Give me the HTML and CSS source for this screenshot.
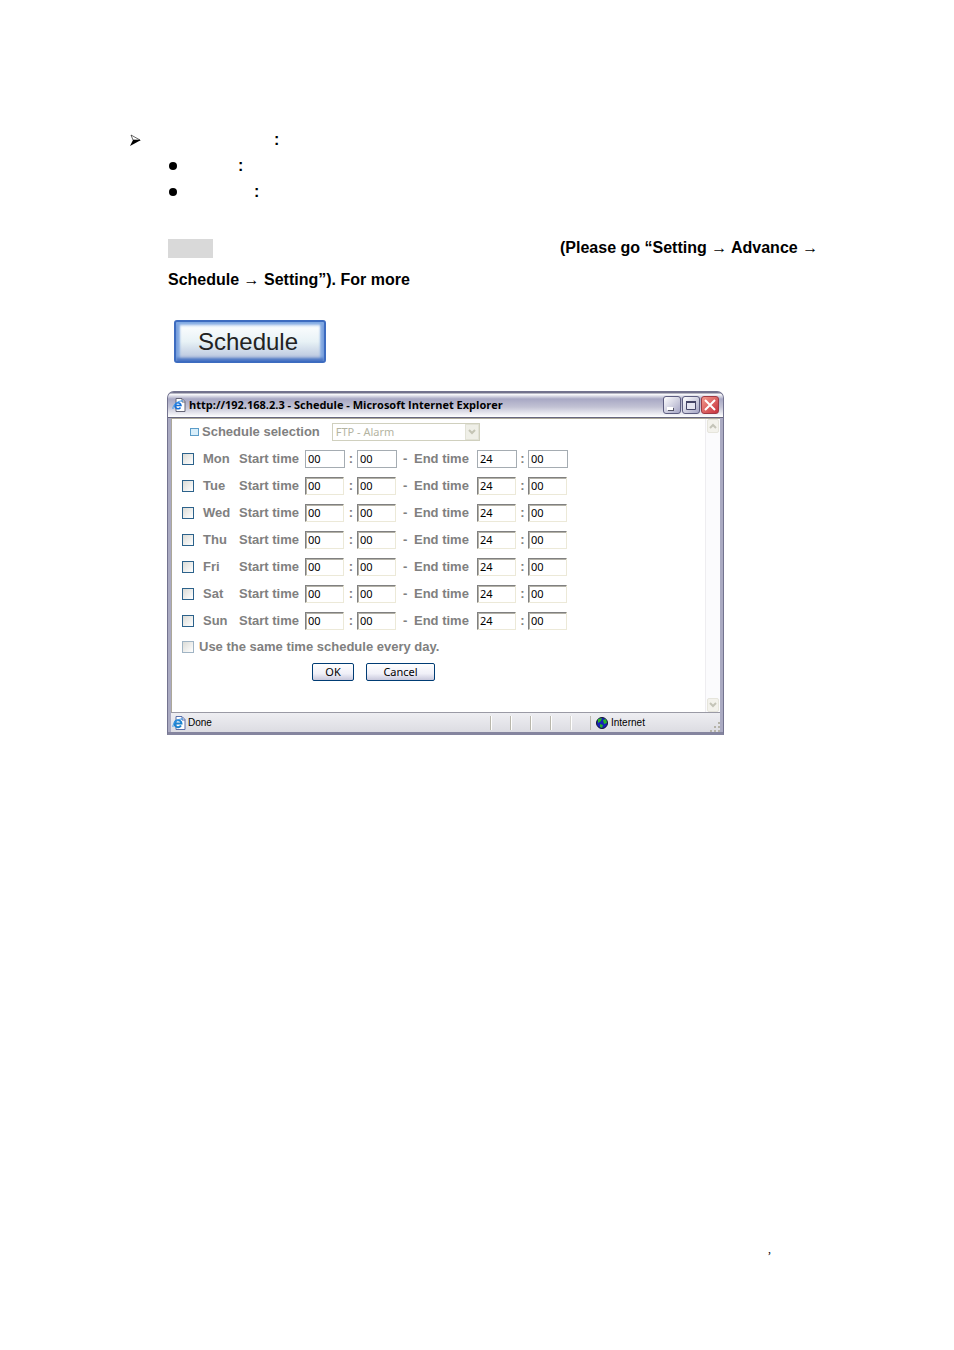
FILE: index.html
```
<!DOCTYPE html>
<html lang="en">
<head>
  <meta charset="UTF-8">
  <meta name="viewport" content="width=device-width, initial-scale=1.0">
  <title>Schedule</title>
  <link rel="stylesheet" href="styles.css">
</head>
<body>
  <main class="page">
    <div class="item item-top">
      <svg class="arrow" viewBox="0 0 11 12" width="11" height="12"><path d="M1 1l9 5H3z" fill="#fff" stroke="#000" stroke-width=".6"/><path d="M3 6h8L0 12z"/></svg>
      <b>:</b>
    </div>
    <div class="content">
      <ul class="list">
        <li class="item item-short"><span class="dot"></span><b>:</b></li>
        <li class="item item-long"><span class="dot"></span><b>:</b></li>
      </ul>

      <p class="note"><span class="mark"></span>(Please go “Setting <i>→</i> Advance <i>→</i> Schedule <i>→</i> Setting”). For more</p>

      <button class="big-btn" type="button">Schedule</button>

      <section class="window">
        <header class="titlebar">
          <svg class="ie" viewBox="0 0 14 14" width="14" height="14"><path d="M4 .5h6l3 3v10H4z" fill="#fff" stroke="#667"/><path d="M10 1v3h3" fill="none" stroke="#667"/><path d="M8.500 9.500A3 3 0 1 1 9 7.500H3" fill="none" stroke="#1671d9" stroke-width="1.600"/><path d="M1 11C0 8 6 2 11 3" fill="none" stroke="#3b9af0"/></svg>
          <h1>http://192.168.2.3 - Schedule - Microsoft Internet Explorer</h1>
          <button class="win-btn" type="button" aria-label="Minimize"><svg viewBox="0 0 16 16"><path d="M4 11h6v3H4z" fill="#556"/><path d="M3 10h6v3H3z" fill="#fff"/></svg></button>
          <button class="win-btn" type="button" aria-label="Maximize"><svg viewBox="0 0 16 16"><path d="M3.500 4.500h9v8h-9z" fill="#e4e4f0" stroke="#446"/><path d="M3 4h10v2H3z" fill="#446"/></svg></button>
          <button class="win-btn close" type="button" aria-label="Close"><svg viewBox="0 0 16 16"><path d="M3 3l10 10M13 3L3 13" stroke="#fff" stroke-width="2"/></svg></button>
        </header>

        <div class="view">
          <form class="form">
            <div class="selection">
              <span class="square"></span>
              <label for="target">Schedule selection</label>
              <span class="select">
                <select id="target" disabled><option>FTP - Alarm</option></select>
                <span class="drop"><svg viewBox="0 0 8 6" width="8" height="6"><path d="M1 1l3 3 3-3" fill="none" stroke="#c4c4b4" stroke-width="2"/></svg></span>
              </span>
            </div>

            <div class="day first">
              <input type="checkbox" id="mon"><label for="mon">Mon</label><span>Start time</span>
              <input type="text" value="00" aria-label="Mon start hour"><span class="sep">:</span><input type="text" value="00" aria-label="Mon start minute">
              <span class="dash">-</span><span>End time</span>
              <input type="text" value="24" aria-label="Mon end hour"><span class="sep">:</span><input type="text" value="00" aria-label="Mon end minute">
            </div>
            <div class="day">
              <input type="checkbox" id="tue"><label for="tue">Tue</label><span>Start time</span>
              <input type="text" value="00" aria-label="Tue start hour"><span class="sep">:</span><input type="text" value="00" aria-label="Tue start minute">
              <span class="dash">-</span><span>End time</span>
              <input type="text" value="24" aria-label="Tue end hour"><span class="sep">:</span><input type="text" value="00" aria-label="Tue end minute">
            </div>
            <div class="day">
              <input type="checkbox" id="wed"><label for="wed">Wed</label><span>Start time</span>
              <input type="text" value="00" aria-label="Wed start hour"><span class="sep">:</span><input type="text" value="00" aria-label="Wed start minute">
              <span class="dash">-</span><span>End time</span>
              <input type="text" value="24" aria-label="Wed end hour"><span class="sep">:</span><input type="text" value="00" aria-label="Wed end minute">
            </div>
            <div class="day">
              <input type="checkbox" id="thu"><label for="thu">Thu</label><span>Start time</span>
              <input type="text" value="00" aria-label="Thu start hour"><span class="sep">:</span><input type="text" value="00" aria-label="Thu start minute">
              <span class="dash">-</span><span>End time</span>
              <input type="text" value="24" aria-label="Thu end hour"><span class="sep">:</span><input type="text" value="00" aria-label="Thu end minute">
            </div>
            <div class="day">
              <input type="checkbox" id="fri"><label for="fri">Fri</label><span>Start time</span>
              <input type="text" value="00" aria-label="Fri start hour"><span class="sep">:</span><input type="text" value="00" aria-label="Fri start minute">
              <span class="dash">-</span><span>End time</span>
              <input type="text" value="24" aria-label="Fri end hour"><span class="sep">:</span><input type="text" value="00" aria-label="Fri end minute">
            </div>
            <div class="day">
              <input type="checkbox" id="sat"><label for="sat">Sat</label><span>Start time</span>
              <input type="text" value="00" aria-label="Sat start hour"><span class="sep">:</span><input type="text" value="00" aria-label="Sat start minute">
              <span class="dash">-</span><span>End time</span>
              <input type="text" value="24" aria-label="Sat end hour"><span class="sep">:</span><input type="text" value="00" aria-label="Sat end minute">
            </div>
            <div class="day">
              <input type="checkbox" id="sun"><label for="sun">Sun</label><span>Start time</span>
              <input type="text" value="00" aria-label="Sun start hour"><span class="sep">:</span><input type="text" value="00" aria-label="Sun start minute">
              <span class="dash">-</span><span>End time</span>
              <input type="text" value="24" aria-label="Sun end hour"><span class="sep">:</span><input type="text" value="00" aria-label="Sun end minute">
            </div>

            <div class="same">
              <input type="checkbox" id="same"><label for="same">Use the same time schedule every day.</label>
            </div>
            <div class="actions">
              <button class="btn" type="button">OK</button>
              <button class="btn btn-wide" type="button">Cancel</button>
            </div>
          </form>
          <div class="scroll">
            <span><svg viewBox="0 0 8 6" width="8" height="6"><path d="M1 5l3-3 3 3" fill="none" stroke="#c4c4b8" stroke-width="2"/></svg></span>
            <span><svg viewBox="0 0 8 6" width="8" height="6"><path d="M1 1l3 3 3-3" fill="none" stroke="#c4c4b8" stroke-width="2"/></svg></span>
          </div>
        </div>

        <footer class="status">
          <span class="done">
            <svg class="ie" viewBox="0 0 14 14" width="14" height="14"><path d="M4 .5h6l3 3v10H4z" fill="#fff" stroke="#5a6fa8"/><path d="M10 1v3h3" fill="none" stroke="#5a6fa8"/><path d="M9 9.500A3.500 3.500 0 1 1 9.500 7.500H3" fill="none" stroke="#1b83cf" stroke-width="2"/><path d="M1 11C0 8 6 2 11 3" fill="none" stroke="#3b9af0"/></svg>
            Done
          </span>
          <span class="cell"></span><span class="cell"></span><span class="cell"></span><span class="cell"></span><span class="cell faint"></span>
          <span class="zone">
            <svg viewBox="0 0 12 12" width="12" height="12"><circle cx="6" cy="6" r="5.500" fill="#1620b8" stroke="#113"/><path d="M2 2l4-1-1 3-3 2zM7 3l3-1 1 4-3 1zM4 7l3 1-1 3-2-1z" fill="#28b428"/></svg>
            Internet
          </span>
          <svg class="grip" viewBox="0 0 10 10" width="10" height="10"><path d="M8 0h2v2H8zM8 4h2v2H8zM4 4h2v2H4zM8 8h2v2H8zM4 8h2v2H4zM0 8h2v2H0z" fill="#b5b3a8"/></svg>
        </footer>
      </section>
    </div>
    <footer class="page-foot">,</footer>
  </main>
</body>
</html>
```
FILE: styles.css
```
*{box-sizing:border-box;}
body{margin:0;background:#fff;color:#000;font-family:"Liberation Sans",Arial,sans-serif;font-size:16px;}
svg{display:block;flex:none;}
.page{min-height:100vh;display:flex;flex-direction:column;padding:127px 125px 94px 130px;}
.content{padding-left:37px;}

/* bullets */
.item{display:flex;align-items:center;height:26px;}
.item-top{gap:133px;}
.list{list-style:none;margin:0;padding:0;}
.item-short{gap:61px;}
.item-long{gap:77px;}
.dot{width:8px;height:8px;margin-left:2px;border-radius:50%;background:#000;}

.note{margin:27px 0 0;padding-left:1px;font-weight:bold;line-height:32px;}
.note i{font:16px/20px "Liberation Serif",serif;}
.mark{display:inline-block;vertical-align:middle;width:45px;height:19px;margin-right:347px;background:#d9d9d9;}

.big-btn{display:block;width:152px;height:43px;margin:24px 0 28px 7px;padding:0 4px 0 0;border:2px solid #3d6cc0;border-radius:3px;background:linear-gradient(#fff,#e8f2f6 50%,#b2bfda);box-shadow:inset 0 3px 3px #7fa8e2,inset 0 -3px 3px #4a74c4,inset 4px 0 2px #8aaee4,inset -4px 0 2px #8aaee4;color:#222;font:24px/36px "Liberation Sans",Arial,sans-serif;}

/* browser window */
.window{max-width:557px;border:1px solid #73738f;border-bottom:3px solid #85859f;border-radius:7px 7px 0 0;padding:0 3px;background:#aaaac2;overflow:hidden;color:#000;font:11px/14px "Noto Sans","Open Sans",sans-serif;}
.titlebar{display:flex;align-items:center;gap:1px;height:26px;margin:0 -3px;padding:1px 4px 0;border-bottom:1px solid #66667e;background:linear-gradient(#72728c 1px,#fff 2px,#a8a8c4 7px,#c2c2d4 15px,#fff);}
.titlebar h1{flex:1;margin:0 0 0 2px;font:bold 11px/16px "Open Sans","Noto Sans",sans-serif;white-space:nowrap;}
.win-btn{width:18px;height:18px;padding:0;border:1px solid #5d5d80;border-radius:3px;background:linear-gradient(135deg,#fff,#a5a5c4);}
.win-btn.close{border-color:#a03a44;background:linear-gradient(135deg,#f39a8c,#c6303c);}

.view{display:flex;border-top:1px solid #aca899;border-left:1px solid #aca899;background:#fff;}
.form{flex:1;min-width:0;padding:3px 0 31px 10px;color:#808080;font:bold 13px/18px "Liberation Sans",Arial,sans-serif;}
.selection{display:flex;align-items:center;height:20px;padding-left:8px;}
.square{width:9px;height:8px;margin-right:3px;border:1px solid #5b9cc8;background:#d8eefa;}
.select{position:relative;margin-left:12px;}
select{display:block;appearance:none;width:148px;height:18px;padding:0 3px;border:1px solid #d0d0be;border-radius:0;background:#fff;color:#b4b4a2;opacity:1;font:11px/14px "Noto Sans",sans-serif;}
.drop{position:absolute;top:1px;right:1px;display:grid;place-items:center;width:14px;height:16px;background:#efefe7;border:1px solid #e2e2d6;}

.day{display:grid;grid-template-columns:21px 36px 66px 40px 12px 40px 17px 63px 40px 11px 40px;align-items:center;height:27px;white-space:nowrap;}
.day.first{margin-top:3px;}
.sep{text-align:center;}
.dash{padding-left:6px;}
input[type=checkbox]{appearance:none;width:12px;height:12px;margin:0;border:1px solid #2c628b;background:linear-gradient(135deg,#dcdcd7,#fff);}
input[type=text]{width:39px;height:18px;padding:0 2px;border:1px solid;border-color:#808080 #ece9d8 #ece9d8 #808080;border-radius:0;background:#fff;box-shadow:inset 1px 1px #b4b2a8;color:#000;font:11px/14px "Noto Sans",sans-serif;}
.first input[type=text]{width:40px;border-color:#a5acb2;box-shadow:none;}
.same{display:flex;align-items:center;gap:5px;height:26px;}
.same input{border-color:#a0b4c4;}
.actions{display:flex;gap:12px;padding:3px 0 0 130px;}
.btn{width:42px;height:18px;padding:0;border:1px solid #003c74;border-radius:2px;background:linear-gradient(#fff,#f0f0f8 60%,#c8c8dc);color:#000;font:11px/14px "Noto Sans",sans-serif;}
.btn-wide{width:69px;}

.scroll{display:flex;flex-direction:column;justify-content:space-between;width:15px;border-left:1px solid #eeedf0;background:#fbfbfd;}
.scroll span{display:grid;place-items:center;height:14px;margin:0 1px;border:1px solid #e6e5dc;border-radius:2px;background:#f3f2ec;}

.status{display:flex;align-items:center;height:20px;border-top:1px solid #9a9aa5;background:linear-gradient(#eeeef2,#dcdce2);font:10px/14px "Liberation Sans",Arial,sans-serif;}
.done,.zone{display:flex;align-items:center;gap:2px;}
.done{flex:1;padding-left:1px;}
.cell{width:20px;height:14px;border-left:1px solid #b9b7ac;box-shadow:inset 1px 0 #fff;}
.faint{border-color:#d3d2ce;}
.zone{width:120px;height:14px;padding-left:5px;gap:3px;border-left:1px solid #b9b7ac;}
.grip{align-self:flex-end;}

.page-foot{margin-top:auto;padding-right:58px;text-align:right;font:12px/14px "Liberation Serif",serif;}
```
